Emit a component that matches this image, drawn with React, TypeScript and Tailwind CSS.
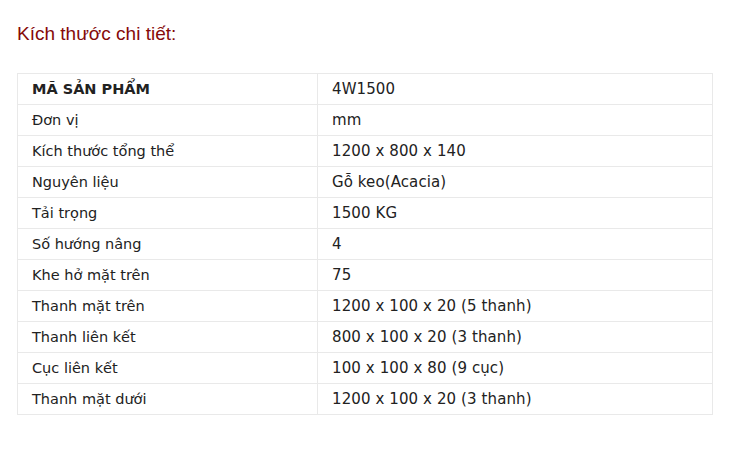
const rows: [string, string][] = [
  ["Đơn vị", "mm"],
  ["Kích thước tổng thể", "1200 x 800 x 140"],
  ["Nguyên liệu", "Gỗ keo(Acacia)"],
  ["Tải trọng", "1500 KG"],
  ["Số hướng nâng", "4"],
  ["Khe hở mặt trên", "75"],
  ["Thanh mặt trên", "1200 x 100 x 20 (5 thanh)"],
  ["Thanh liên kết", "800 x 100 x 20 (3 thanh)"],
  ["Cục liên kết", "100 x 100 x 80 (9 cục)"],
  ["Thanh mặt dưới", "1200 x 100 x 20 (3 thanh)"],
];

const cell = "border border-[#e9e9e9] h-[31px] px-[14px] py-0 align-middle text-left";

export default function App() {
  return (
    <div className="bg-white min-h-[466px] w-[751px] px-[17px] pt-[22px] font-['DejaVu_Sans',Verdana,sans-serif] text-[#222]">
      <h2 className="font-['Liberation_Sans',Arial,sans-serif] text-[19px] leading-[24px] text-[#860a0a]">
        Kích thước chi tiết:
      </h2>
      <table className="mt-[27px] w-[696px] border-collapse text-[14.5px] leading-[18px]">
        <tbody>
          <tr>
            <th className={`${cell} w-[300px] font-bold`}>MÃ SẢN PHẨM</th>
            <td className={`${cell} text-[15px] tracking-[0.1px]`}>4W1500</td>
          </tr>
          {rows.map(([k, v]) => (
            <tr key={k}>
              <td className={`${cell} w-[300px]`}>{k}</td>
              <td className={`${cell} text-[15px] tracking-[0.1px]`}>{v}</td>
            </tr>
          ))}
        </tbody>
      </table>
    </div>
  );
}
